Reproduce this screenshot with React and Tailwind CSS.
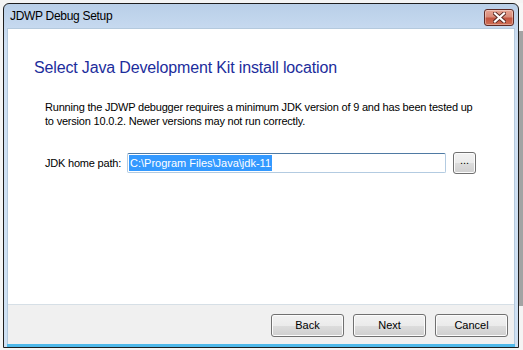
import React from "react";

const ui = { fontFamily: '"Liberation Sans", Arial, sans-serif' };

function WinButton({ children, className = "" }) {
  return (
    <button
      type="button"
      className={
        "flex items-center justify-center rounded-[3px] border border-[#707070] bg-[linear-gradient(#f2f2f2_0%,#ebebeb_50%,#dddddd_50%,#cfcfcf_100%)] text-[11px] text-black shadow-[inset_0_0_0_1px_#fcfcfc] " +
        className
      }
    >
      {children}
    </button>
  );
}

function CloseButton() {
  return (
    <div className="flex h-[17px] w-[30px] items-center justify-center rounded-[3px] border border-[#5f2a25] bg-[linear-gradient(#e8a493_0%,#d98c7a_45%,#c35440_55%,#cf6f55_100%)] shadow-[inset_0_0_0_1px_rgba(255,255,255,0.35)]">
      <svg width="13" height="11" viewBox="0 0 13 11">
        <path
          d="M2 1.5 L11 9.5 M11 1.5 L2 9.5"
          stroke="#5a2a24"
          strokeWidth="4"
          strokeLinecap="square"
        />
        <path
          d="M2 1.5 L11 9.5 M11 1.5 L2 9.5"
          stroke="#ffffff"
          strokeWidth="2.2"
          strokeLinecap="square"
        />
      </svg>
    </div>
  );
}

export default function App() {
  return (
    <div className="flex h-[350px] w-[523px] overflow-hidden bg-[#f4f4f4] pl-[3px] pt-[3px]" style={ui}>
      {/* dialog window */}
      <div className="flex h-[345px] w-[516px] shrink-0 flex-col rounded-t-[6px] border border-[#1e1e1e] bg-[linear-gradient(#b9cfe8_0px,#c6d9ef_24px,#cfe0f3_40px,#cfe1f3_100%)]">
        {/* title bar */}
        <div className="flex h-[24px] items-center justify-between pl-[6px] pr-[4px]">
          <span className="text-[12px] tracking-[-0.3px] text-black">JDWP Debug Setup</span>
          <div className="pt-[3px]">
            <CloseButton />
          </div>
        </div>

        {/* client */}
        <div className="mx-[3px] flex flex-1 flex-col border border-[#b4c9dd] border-b-0 bg-white">
          <div className="flex h-[275px] flex-col">
            <h1 className="mt-[29px] pl-[26px] text-[16px] leading-[19px] tracking-[-0.15px] text-[#1c2d9c]">
              Select Java Development Kit install location
            </h1>
            <p className="mt-[23px] pl-[37px] text-[11px] leading-[14px] tracking-[-0.2px] text-black">
              Running the JDWP debugger requires a minimum JDK version of 9 and has been tested up
              <br />
              to version 10.0.2. Newer versions may not run correctly.
            </p>
            <div className="mt-[24px] flex items-center pl-[37px]">
              <span className="w-[82px] text-[11px] tracking-[-0.2px] text-black">JDK home path:</span>
              <div className="flex h-[20px] w-[319px] items-center rounded-[2px] border border-[#b3cbe1] border-t-[#4f7aa3] bg-white px-[1px]">
                <span className="bg-[#3399ff] px-[1px] text-[11px] leading-[16px] text-white">
                  C:\Program Files\Java\jdk-11
                </span>
              </div>
              <WinButton className="ml-[7px] h-[22px] w-[23px] pb-[5px] leading-none">...</WinButton>
            </div>
          </div>
          <div className="flex flex-1 items-start justify-end gap-[9px] border-t border-[#d6dfe6] bg-[#f0f0f0] pr-[6px] pt-[9px]">
            <WinButton className="h-[23px] w-[73px]">Back</WinButton>
            <WinButton className="h-[23px] w-[73px]">Next</WinButton>
            <WinButton className="h-[23px] w-[73px]">Cancel</WinButton>
          </div>
        </div>
        <div className="mx-[3px] h-[3px] bg-[#4fb9ea]" />
      </div>

      {/* background window behind */}
      <div className="flex flex-1 flex-col">
        <div className="h-[28px] bg-[#f7f7f7]" />
        <div className="h-[275px] bg-[#a3a3a3]" />
        <div className="flex-1 bg-[#f4f4f4]" />
      </div>
    </div>
  );
}
